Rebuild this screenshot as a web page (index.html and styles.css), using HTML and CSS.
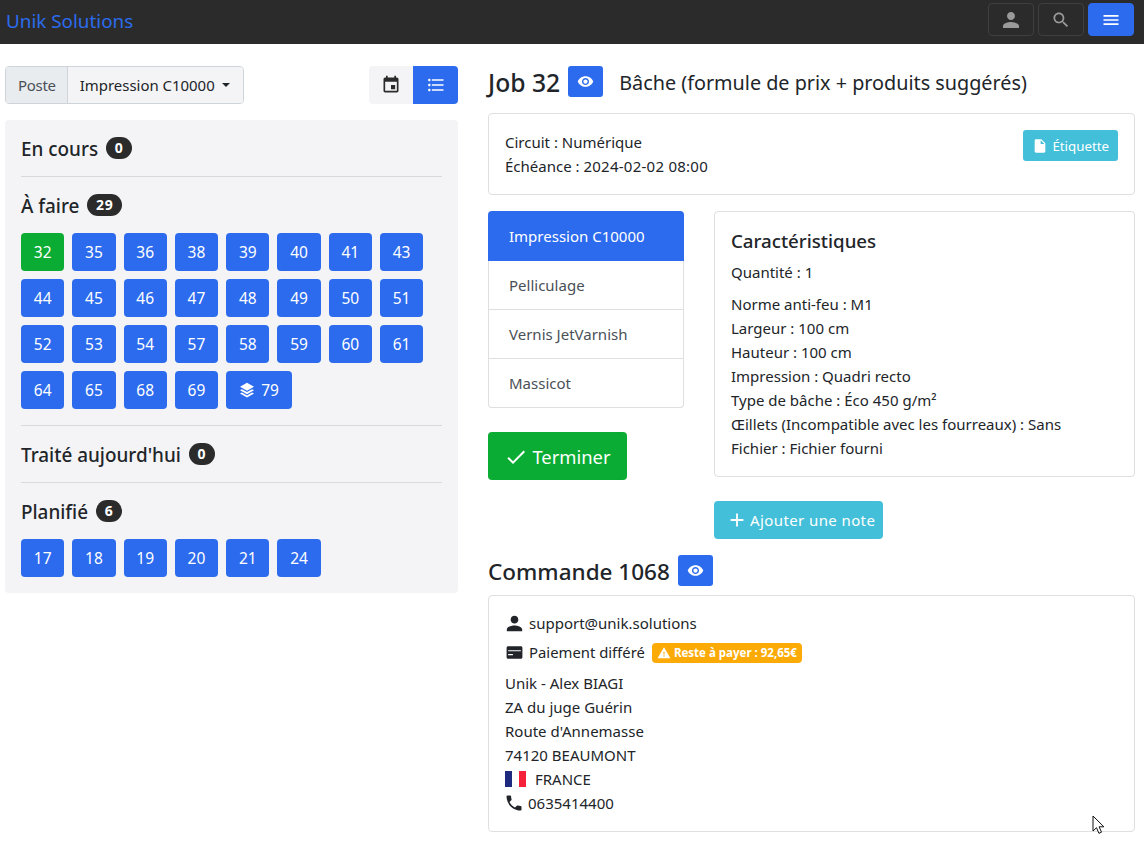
FILE: index.html
```html
<!DOCTYPE html>
<html lang="fr">
<head>
<meta charset="utf-8">
<title>Unik Solutions</title>
<link rel="stylesheet" href="styles.css">
</head>
<body>
<svg class="defs" width="0" height="0">
<symbol id="i-person" viewBox="0 0 24 24"><path d="M12 12c2.210 0 4-1.790 4-4s-1.790-4-4-4-4 1.790-4 4 1.790 4 4 4zm0 2c-2.670 0-8 1.340-8 4v2h16v-2c0-2.660-5.330-4-8-4z"/></symbol>
<symbol id="i-search" viewBox="0 0 24 24"><path d="M15.500 14h-.79l-.28-.27C15.410 12.590 16 11.110 16 9.500 16 5.910 13.090 3 9.500 3S3 5.910 3 9.500 5.910 16 9.500 16c1.610 0 3.090-.59 4.230-1.570l.27.28v.79l5 4.990L20.490 19l-4.990-5zm-6 0C7.010 14 5 11.990 5 9.500S7.010 5 9.500 5 14 7.010 14 9.500 11.990 14 9.500 14z"/></symbol>
<symbol id="i-menu" viewBox="0 0 24 24"><path d="M3 18h18v-2H3v2zm0-5h18v-2H3v2zm0-7v2h18V6H3z"/></symbol>
<symbol id="i-event" viewBox="0 0 24 24"><path d="M17 12h-5v5h5v-5zM16 1v2H8V1H6v2H5c-1.110 0-1.990.9-1.990 2L3 19c0 1.100.89 2 2 2h14c1.100 0 2-.9 2-2V5c0-1.100-.9-2-2-2h-1V1h-2zm3 18H5V8h14v11z"/></symbol>
<symbol id="i-list" viewBox="0 0 24 24"><path d="M4 10.500c-.83 0-1.500.67-1.500 1.500s.67 1.500 1.500 1.500 1.500-.67 1.500-1.500-.67-1.500-1.500-1.500zm0-6c-.83 0-1.500.67-1.500 1.500S3.170 7.500 4 7.500 5.500 6.830 5.500 6 4.830 4.500 4 4.500zm0 12c-.83 0-1.500.68-1.500 1.500s.68 1.500 1.500 1.500 1.500-.68 1.500-1.500-.67-1.500-1.500-1.500zM7 19h14v-2H7v2zm0-6h14v-2H7v2zm0-8v2h14V5H7z"/></symbol>
<symbol id="i-eye" viewBox="0 0 24 24"><path d="M12 4.500C7 4.500 2.730 7.610 1 12c1.730 4.390 6 7.500 11 7.500s9.270-3.110 11-7.500c-1.730-4.390-6-7.500-11-7.500zM12 17c-2.760 0-5-2.240-5-5s2.240-5 5-5 5 2.240 5 5-2.240 5-5 5zm0-8c-1.660 0-3 1.340-3 3s1.340 3 3 3 3-1.340 3-3-1.340-3-3-3z"/></symbol>
<symbol id="i-file" viewBox="0 0 24 24"><path d="M6 2c-1.100 0-1.990.9-1.990 2L4 20c0 1.100.89 2 1.990 2H18c1.100 0 2-.9 2-2V8l-6-6H6zm7 7V3.500L18.500 9H13z"/></symbol>
<symbol id="i-check" viewBox="0 0 24 24"><path d="M9 16.200L4.800 12l-1.400 1.400L9 19 21 7l-1.400-1.400L9 16.200z"/></symbol>
<symbol id="i-add" viewBox="0 0 24 24"><path d="M19 13h-6v6h-2v-6H5v-2h6V5h2v6h6v2z"/></symbol>
<symbol id="i-warn" viewBox="0 0 24 24"><path d="M1 21h22L12 2 1 21zm12-3h-2v-2h2v2zm0-4h-2v-4h2v4z"/></symbol>
<symbol id="i-card" viewBox="0 0 24 24"><path d="M20 4H4c-1.110 0-1.990.89-1.990 2L2 18c0 1.110.89 2 2 2h16c1.110 0 2-.89 2-2V6c0-1.110-.89-2-2-2zM4 9h16v1.500H4zm0 5h6v1.500H4z" fill-rule="evenodd"/></symbol>
<symbol id="i-phone" viewBox="0 0 24 24"><path d="M6.620 10.790c1.440 2.830 3.760 5.140 6.590 6.590l2.200-2.200c.27-.27.67-.36 1.020-.24 1.120.37 2.330.57 3.570.57.55 0 1 .45 1 1V20c0 .55-.45 1-1 1-9.390 0-17-7.610-17-17 0-.55.45-1 1-1h3.500c.55 0 1 .45 1 1 0 1.250.2 2.450.57 3.570.11.35.03.74-.25 1.020l-2.200 2.200z"/></symbol>
<symbol id="i-layers" viewBox="0 0 24 24"><path d="M12 1L1.500 7 12 13l10.500-6zM4.300 10.700L1.500 12.200 12 18.200l10.500-6-2.800-1.500L12 15.100zM4.300 15.800L1.500 17.300 12 23.300l10.500-6-2.800-1.500L12 20.200z"/></symbol>
</svg>

<header class="navbar">
  <a class="brand">Unik Solutions</a>
  <div class="nav-actions">
    <button class="nav-btn"><svg class="ic24"><use href="#i-person"/></svg></button>
    <button class="nav-btn"><svg class="ic20"><use href="#i-search"/></svg></button>
    <button class="nav-btn nav-btn-active"><svg class="ic20"><use href="#i-menu"/></svg></button>
  </div>
</header>

<main class="layout">
  <section class="left">
    <div class="toolbar">
      <div class="input-group">
        <span class="input-label">Poste</span>
        <span class="input-select">Impression C10000<i class="caret"></i></span>
      </div>
      <div class="toggle">
        <button class="toggle-btn"><svg class="ic20"><use href="#i-event"/></svg></button>
        <button class="toggle-btn toggle-on"><svg class="ic20"><use href="#i-list"/></svg></button>
      </div>
    </div>
    <div class="panel">
      <h5 class="group-title"><span class="group-name">En cours</span> <span class="pill">0</span></h5>
      <hr class="rule">
      <h5 class="group-title"><span class="group-name">À faire</span> <span class="pill">29</span></h5>
      <div class="jobs">
        <a class="job job-current">32</a><a class="job">35</a><a class="job">36</a><a class="job">38</a><a class="job">39</a><a class="job">40</a><a class="job">41</a><a class="job">43</a>
        <a class="job">44</a><a class="job">45</a><a class="job">46</a><a class="job">47</a><a class="job">48</a><a class="job">49</a><a class="job">50</a><a class="job">51</a>
        <a class="job">52</a><a class="job">53</a><a class="job">54</a><a class="job">57</a><a class="job">58</a><a class="job">59</a><a class="job">60</a><a class="job">61</a>
        <a class="job">64</a><a class="job">65</a><a class="job">68</a><a class="job">69</a><a class="job job-stack"><svg class="ic16"><use href="#i-layers"/></svg> 79</a>
      </div>
      <hr class="rule">
      <h5 class="group-title"><span class="group-name">Traité aujourd'hui</span> <span class="pill">0</span></h5>
      <hr class="rule">
      <h5 class="group-title"><span class="group-name">Planifié</span> <span class="pill">6</span></h5>
      <div class="jobs jobs-last">
        <a class="job">17</a><a class="job">18</a><a class="job">19</a><a class="job">20</a><a class="job">21</a><a class="job">24</a>
      </div>
    </div>
  </section>

  <section class="right">
    <div class="heading">
      <h4 class="title title-job">Job 32</h4>
      <button class="eye"><svg class="ic17"><use href="#i-eye"/></svg></button>
      <span class="subtitle">Bâche (formule de prix + produits suggérés)</span>
    </div>
    <div class="card card-job">
      <div>
        <div>Circuit : Numérique</div>
        <div>Échéance : <span class="date">2024-02-02 08:00</span></div>
      </div>
      <button class="btn-label"><svg class="ic16"><use href="#i-file"/></svg> Étiquette</button>
    </div>
    <div class="detail">
      <div class="steps-col">
        <ul class="steps">
          <li class="step step-on">Impression C10000</li>
          <li class="step">Pelliculage</li>
          <li class="step">Vernis JetVarnish</li>
          <li class="step">Massicot</li>
        </ul>
        <button class="btn-finish"><svg class="ic24"><use href="#i-check"/></svg> Terminer</button>
      </div>
      <div class="spec-col">
        <div class="card spec">
          <h5 class="spec-title">Caractéristiques</h5>
          <p class="qty">Quantité : 1</p>
          <div>Norme anti-feu : M1</div>
          <div>Largeur : 100 cm</div>
          <div>Hauteur : 100 cm</div>
          <div>Impression : Quadri recto</div>
          <div>Type de bâche : Éco 450 g/m²</div>
          <div>Œillets (Incompatible avec les fourreaux) : Sans</div>
          <div>Fichier : Fichier fourni</div>
        </div>
        <button class="btn-note"><svg class="ic22"><use href="#i-add"/></svg> <span class="note-text">Ajouter une note</span></button>
      </div>
    </div>
    <div class="heading heading-order">
      <h4 class="title title-order">Commande 1068</h4>
      <button class="eye"><svg class="ic17"><use href="#i-eye"/></svg></button>
    </div>
    <div class="card order">
      <div class="line line-mail"><svg class="ic-mail"><use href="#i-person"/></svg> support@unik.solutions</div>
      <div class="line line-pay"><svg class="ic-pay"><use href="#i-card"/></svg> Paiement différé <span class="due"><svg class="ic14"><use href="#i-warn"/></svg> Reste à payer : 92,65€</span></div>
      <div>Unik - Alex BIAGI</div>
      <div>ZA du juge Guérin</div>
      <div>Route d'Annemasse</div>
      <div>74120 BEAUMONT</div>
      <div class="line"><span class="flag"><i class="flag-b"></i><i class="flag-w"></i><i class="flag-r"></i></span> FRANCE</div>
      <div class="line"><svg class="ic-phone"><use href="#i-phone"/></svg> 0635414400</div>
    </div>
  </section>
</main>

<svg class="cursor" width="13" height="20" viewBox="0 0 13 20"><path d="M1 1v15l3.500-3.300 2.400 5.600 2.600-1.100-2.400-5.400h4.800z" fill="#fff" stroke="#111" stroke-width="1"/></svg>
</body>
</html>
```
FILE: styles.css
```css
* { box-sizing: border-box; }
html, body { margin: 0; padding: 0; }
body {
  font-family: "Noto Sans", "Open Sans", sans-serif;
  font-size: 15px;
  line-height: 24px;
  color: #212529;
  background: #fff;
  height: 845px;
  overflow: hidden;
  position: relative;
}
.defs { position: absolute; }
svg { fill: currentColor; flex: none; }
.ic14 { width: 14px; height: 14px; }
.ic16 { width: 16px; height: 16px; }
.ic17 { width: 17px; height: 17px; }
.ic20 { width: 20px; height: 20px; }
.ic22 { width: 22px; height: 22px; }
.ic24 { width: 24px; height: 24px; }
button { font: inherit; border: 0; cursor: pointer; }

.navbar {
  height: 44px;
  background: #2b2b2b;
  display: flex;
  justify-content: space-between;
  align-items: flex-start;
  padding: 3px 10px 0 6px;
}
.brand { color: #2c6bed; font-size: 18.850px; line-height: 37px; }
.nav-actions { display: flex; gap: 4px; }
.nav-btn {
  width: 46px;
  height: 33px;
  background: transparent;
  border: 1px solid #3f3f3f;
  border-radius: 4px;
  color: #9a9a9a;
  display: flex;
  align-items: center;
  justify-content: center;
}
.nav-btn-active { background: #2c6bed; border-color: #2c6bed; color: #fff; }

.layout {
  display: grid;
  grid-template-columns: 453px 647px;
  column-gap: 30px;
  padding: 22px 0 0 5px;
}

.toolbar { display: flex; justify-content: space-between; margin-bottom: 16px; }
.input-group { display: flex; height: 38px; border: 1px solid #ced4da; border-radius: 4px; overflow: hidden; }
.input-label { background: #e9ecef; color: #495057; padding: 6px 11px 6px 12px; border-right: 1px solid #ced4da; letter-spacing: -.3px; }
.input-select { background: #f4f4f6; padding: 6px 13px 6px 12px; display: flex; align-items: center; font-size: 14.950px; }
.caret { width: 0; height: 0; margin-left: 7.500px; border: 4.800px solid transparent; border-top-color: #212529; border-bottom: 0; }
.toggle { display: flex; }
.toggle-btn { width: 44px; height: 38px; background: #f4f4f6; color: #2b2b2b; border-radius: 4px 0 0 4px; display: flex; align-items: center; justify-content: center; }
.toggle-on { width: 45px; background: #2c6bed; color: #fff; border-radius: 0 4px 4px 0; }

.panel { background: #f4f4f6; border-radius: 4px; padding: 16px; }
.group-title { margin: 0; height: 24px; font-size: 18.900px; line-height: 24px; font-weight: 500; display: flex; align-items: center; gap: 8px; }
.group-name { padding-top: 2px; }
.pill { background: #2b2b2b; color: #fff; border-radius: 11px; font-size: 14px; font-weight: 700; line-height: 22px; height: 22px; padding: 0 8.600px; letter-spacing: .8px; }
.rule { border: 0; border-top: 1px solid #d8d9db; margin: 16px 0; height: 0; }
.jobs { display: flex; flex-wrap: wrap; gap: 8px; width: 420px; margin-top: 16px; margin-bottom: 16px; }
.jobs-last { margin-bottom: 0; }
.job { height: 38px; width: 43.290px; background: #2c6bed; color: #fff; border-radius: 4px; display: flex; align-items: center; justify-content: center; gap: 5px; font-size: 15.500px; }
.job-stack { width: 66px; gap: 6px; }
.job-current { background: #0aac33; }

.right { display: flex; flex-direction: column; min-width: 0; }
.heading { display: flex; align-items: center; height: 31px; margin-bottom: 16px; }
.heading-order { margin-bottom: 9px; margin-top: 16px; }
.title { margin: 0; font-weight: 500; line-height: 31px; padding-top: 2px; }
.title-job { font-size: 24.700px; }
.title-order { font-size: 22.500px; }
.eye { width: 35px; height: 31px; margin-left: 8px; background: #2c6bed; color: #fff; border-radius: 3px; display: flex; align-items: center; justify-content: center; }
.subtitle { font-size: 19.800px; margin-left: 16px; padding-top: 2px; }
.card { border: 1px solid #dfdfdf; border-radius: 4px; padding: 16px; background: #fff; }
.card-job { display: flex; justify-content: space-between; align-items: flex-start; margin-bottom: 16px; }
.date { letter-spacing: .25px; }
.btn-label { height: 31px; background: #43bfd9; color: #fff; border-radius: 3px; padding: 0 9px; font-size: 13.300px; display: flex; align-items: center; gap: 4px; }

.detail { display: grid; grid-template-columns: 196px 421px; column-gap: 30px; }
.steps { list-style: none; margin: 0 0 24px; padding: 0; }
.step { height: 49px; padding: 0 20px; display: flex; align-items: center; border: 1px solid #dfdfdf; border-top: 0; color: #495057; }
.step:last-child { border-radius: 0 0 4px 4px; }
.step-on { height: 50px; padding: 0 21px; background: #2c6bed; color: #fff; border: 0; border-radius: 4px 4px 0 0; }
.btn-finish { height: 48px; width: 139px; padding-top: 2px; background: #0aac33; color: #fff; border-radius: 4px; font-size: 18.400px; display: flex; align-items: center; justify-content: center; gap: 4px; }
.spec-title { margin: 0 0 7px; padding-top: 1px; font-size: 18.700px; line-height: 24px; font-weight: 500; }
.qty { margin: 0 0 8px; }
.btn-note { margin-top: 24px; height: 38px; width: 169px; padding-left: 12px; background: #43bfd9; color: #fff; border-radius: 4px; display: flex; align-items: center; gap: 2px; }
.note-text { letter-spacing: .4px; }

.line { display: flex; align-items: center; gap: 5px; }
.line-mail { margin-bottom: 5px; }
.line-pay { margin-bottom: 7px; font-size: 14.850px; }
.ic-mail { width: 23px; height: 23px; margin: 0 -2px; }
.ic-pay { width: 19px; height: 19px; }
.ic-phone { width: 20px; height: 20px; margin: 0 -1px 0 -1px; }
.order { padding-top: 15px; padding-bottom: 16px; }
.due { background: #fcaa06; color: #fff; border-radius: 4px; font-size: 11.500px; font-weight: 700; line-height: 20px; height: 20px; padding: 0 5px; margin: 2px 0 0 2px; display: inline-flex; align-items: center; gap: 3px; }
.flag { display: flex; width: 21px; height: 16px; margin-right: 4px; }
.flag i { flex: 1; }
.flag-b { background: #1e2a80; }
.flag-w { background: #fff; }
.flag-r { background: #f5203a; }
.cursor { position: absolute; left: 1092px; top: 815px; }
```
